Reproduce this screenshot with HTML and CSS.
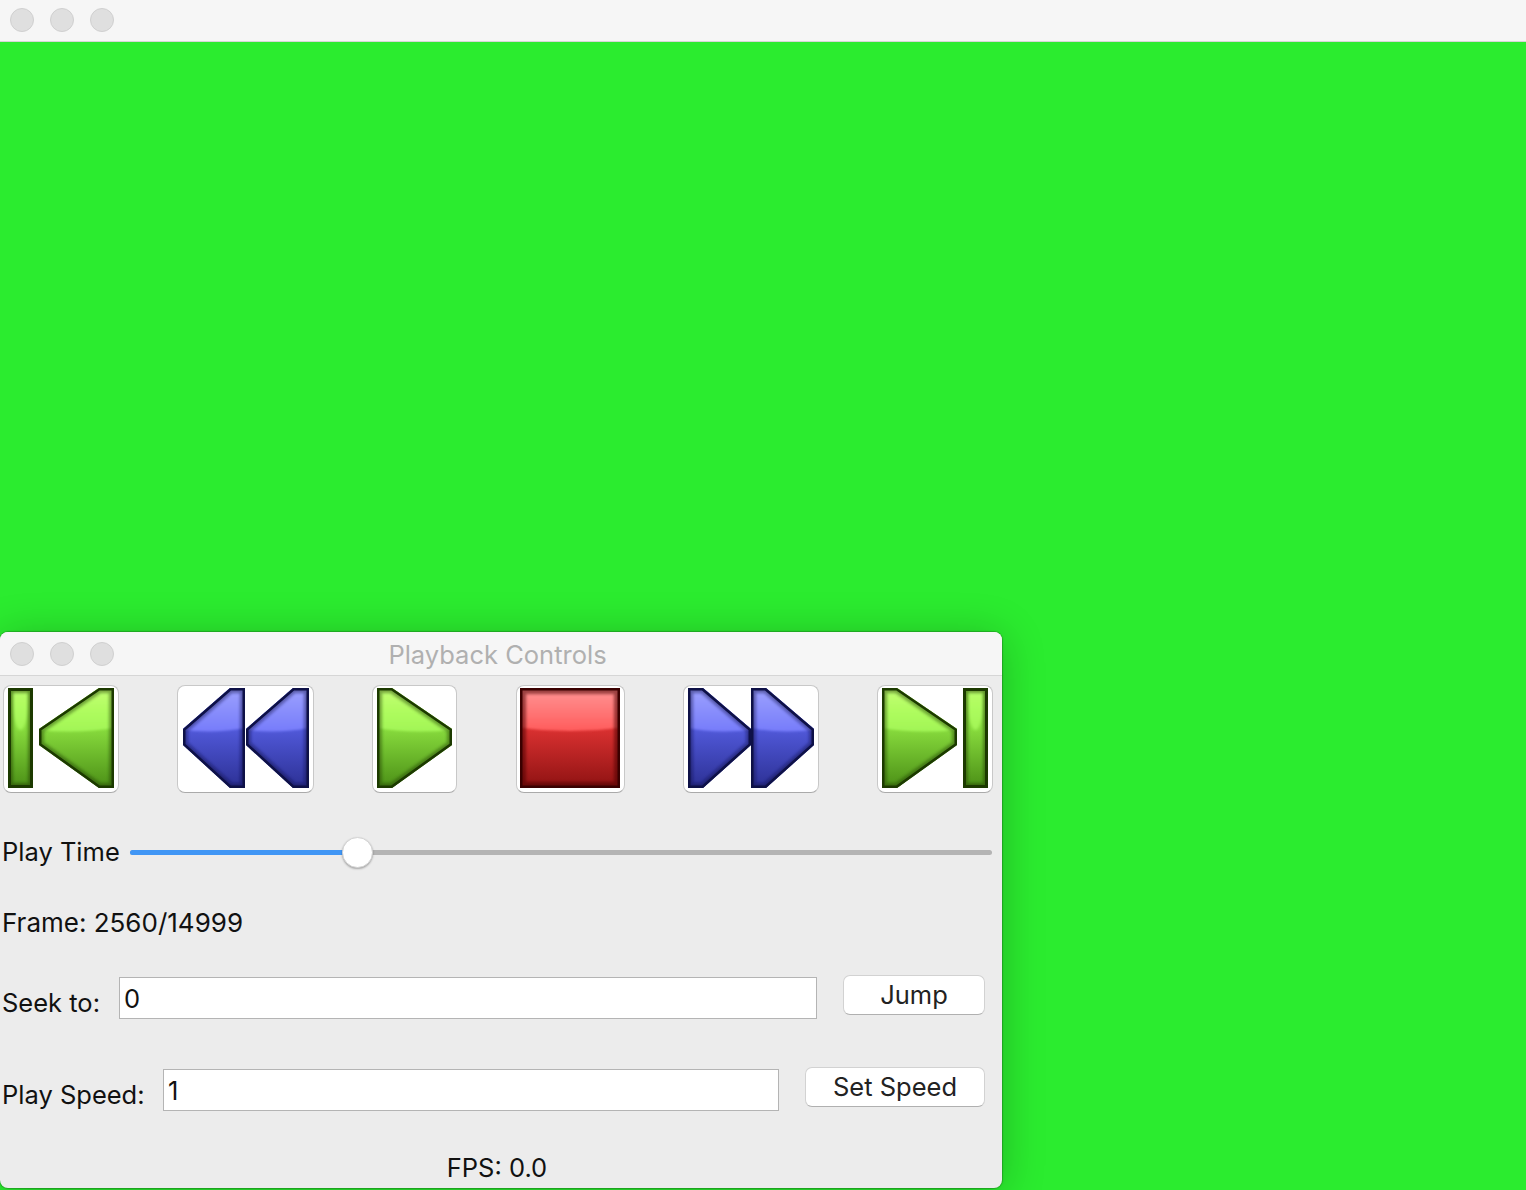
FILE: index.html
```html
<!DOCTYPE html>
<html>
  <head>
    <meta charset="UTF-8" />
    <meta name="viewport" content="width=device-width, initial-scale=1.0" />
    <title>Playback Controls</title>
    <link rel="stylesheet" href="styles.css">
  </head>
  <body>
    <header class="titlebar main-titlebar">
      <div class="lights"><span></span><span></span><span></span></div>
    </header>

    <section class="panel">
      <header class="titlebar panel-titlebar">
        <div class="lights"><span></span><span></span><span></span></div>
        <h1>Playback Controls</h1>
      </header>

      <div class="toolbar">
        <button class="icon-btn btn-first" type="button">
          <svg width="106" height="100" viewBox="0 0 106 100">
            <defs>
              <linearGradient id="green" x1="0" y1="0" x2="0" y2="1">
                <stop offset="0" stop-color="#9be84e" />
                <stop offset="0.42" stop-color="#86d93c" />
                <stop offset="1" stop-color="#4b8f16" />
              </linearGradient>
              <linearGradient id="green-gloss" x1="0" y1="0" x2="0" y2="1">
                <stop offset="0" stop-color="#c8ff78" />
                <stop offset="0.6" stop-color="#aefc5e" />
                <stop offset="1" stop-color="#a2f556" />
              </linearGradient>
              <linearGradient id="blue" x1="0" y1="0" x2="0" y2="1">
                <stop offset="0" stop-color="#5a60e0" />
                <stop offset="0.42" stop-color="#5058d8" />
                <stop offset="1" stop-color="#2c3094" />
              </linearGradient>
              <linearGradient id="blue-gloss" x1="0" y1="0" x2="0" y2="1">
                <stop offset="0" stop-color="#a2a6ff" />
                <stop offset="1" stop-color="#767cfa" />
              </linearGradient>
              <linearGradient id="red" x1="0" y1="0" x2="0" y2="1">
                <stop offset="0" stop-color="#e03636" />
                <stop offset="0.42" stop-color="#d83030" />
                <stop offset="1" stop-color="#8e1212" />
              </linearGradient>
              <linearGradient id="red-gloss" x1="0" y1="0" x2="0" y2="1">
                <stop offset="0" stop-color="#ff9c9c" />
                <stop offset="1" stop-color="#ff5c5c" />
              </linearGradient>
              <filter id="soft" x="-20%" y="-20%" width="140%" height="140%">
                <feGaussianBlur stdDeviation="1.8" />
              </filter>
              <filter id="soft-gloss" x="-40%" y="-40%" width="180%" height="180%">
                <feGaussianBlur stdDeviation="1.5" />
              </filter>
              <filter id="soft-edge" x="-10%" y="-10%" width="120%" height="120%">
                <feGaussianBlur stdDeviation="1" />
              </filter>
              <clipPath id="clip-first-bar"><rect width="25" height="100" /></clipPath>
              <clipPath id="clip-first-tri"><polygon points="31,41 91,0 106,0 106,100 91,100 31,57" /></clipPath>
            </defs>
            <g clip-path="url(#clip-first-bar)">
              <rect width="25" height="100" fill="url(#green)" />
              <ellipse cx="12.5" cy="12" rx="8" ry="30" fill="url(#green-gloss)" filter="url(#soft-gloss)" />
              <rect width="25" height="100" fill="none" stroke="#1c3a00" stroke-width="10" opacity="0.5" filter="url(#soft)" />
              <rect width="25" height="100" fill="none" stroke="#1c3a00" stroke-width="6" />
            </g>
            <g clip-path="url(#clip-first-tri)">
              <rect x="31" width="75" height="100" fill="url(#green)" />
              <path d="M25 -5H112V39Q68 47 25 41Z" fill="url(#green-gloss)" filter="url(#soft-edge)" />
              <polygon points="31,41 91,0 106,0 106,100 91,100 31,57" fill="none" stroke="#1c3a00" stroke-width="10" opacity="0.45" filter="url(#soft)" />
              <polygon points="31,41 91,0 106,0 106,100 91,100 31,57" fill="none" stroke="#1c3a00" stroke-width="5" />
            </g>
          </svg>
        </button>

        <button class="icon-btn btn-rewind" type="button">
          <svg width="126" height="100" viewBox="0 0 126 100">
            <defs>
              <clipPath id="clip-rw-a"><polygon points="0,41 47,0 62,0 62,100 47,100 0,57" /></clipPath>
              <clipPath id="clip-rw-b"><polygon points="63,41 110,0 126,0 126,100 110,100 63,57" /></clipPath>
            </defs>
            <g clip-path="url(#clip-rw-a)">
              <rect width="62" height="100" fill="url(#blue)" />
              <path d="M-5 -5H68V39Q30 47 -5 41Z" fill="url(#blue-gloss)" filter="url(#soft-edge)" />
              <polygon points="0,41 47,0 62,0 62,100 47,100 0,57" fill="none" stroke="#0e1147" stroke-width="10" opacity="0.45" filter="url(#soft)" />
              <polygon points="0,41 47,0 62,0 62,100 47,100 0,57" fill="none" stroke="#0e1147" stroke-width="5" />
            </g>
            <g clip-path="url(#clip-rw-b)">
              <rect x="63" width="63" height="100" fill="url(#blue)" />
              <path d="M58 -5H132V39Q93 47 58 41Z" fill="url(#blue-gloss)" filter="url(#soft-edge)" />
              <polygon points="63,41 110,0 126,0 126,100 110,100 63,57" fill="none" stroke="#0e1147" stroke-width="10" opacity="0.45" filter="url(#soft)" />
              <polygon points="63,41 110,0 126,0 126,100 110,100 63,57" fill="none" stroke="#0e1147" stroke-width="5" />
            </g>
          </svg>
        </button>

        <button class="icon-btn btn-play" type="button">
          <svg width="75" height="100" viewBox="0 0 75 100">
            <defs>
              <clipPath id="clip-play"><polygon points="0,0 15,0 75,41 75,57 15,100 0,100" /></clipPath>
            </defs>
            <g clip-path="url(#clip-play)">
              <rect width="75" height="100" fill="url(#green)" />
              <path d="M-6 -5H81V41Q35 47 -6 39Z" fill="url(#green-gloss)" filter="url(#soft-edge)" />
              <polygon points="0,0 15,0 75,41 75,57 15,100 0,100" fill="none" stroke="#1c3a00" stroke-width="10" opacity="0.45" filter="url(#soft)" />
              <polygon points="0,0 15,0 75,41 75,57 15,100 0,100" fill="none" stroke="#1c3a00" stroke-width="5" />
            </g>
          </svg>
        </button>

        <button class="icon-btn btn-stop" type="button">
          <svg width="100" height="100" viewBox="0 0 100 100">
            <defs>
              <clipPath id="clip-stop"><rect width="100" height="100" /></clipPath>
            </defs>
            <g clip-path="url(#clip-stop)">
              <rect width="100" height="100" fill="url(#red)" />
              <path d="M-6 -5H106V39Q50 47 -6 39Z" fill="url(#red-gloss)" filter="url(#soft-edge)" />
              <rect width="100" height="100" fill="none" stroke="#4a0000" stroke-width="12" opacity="0.55" filter="url(#soft)" />
              <rect width="100" height="100" fill="none" stroke="#3a0000" stroke-width="5" />
            </g>
          </svg>
        </button>

        <button class="icon-btn btn-forward" type="button">
          <svg width="126" height="100" viewBox="0 0 126 100">
            <defs>
              <clipPath id="clip-ff-a"><polygon points="0,0 15,0 63,41 63,57 15,100 0,100" /></clipPath>
              <clipPath id="clip-ff-b"><polygon points="63,0 78,0 126,41 126,57 78,100 63,100" /></clipPath>
            </defs>
            <g clip-path="url(#clip-ff-a)">
              <rect width="63" height="100" fill="url(#blue)" />
              <path d="M-5 -5H68V41Q30 47 -5 39Z" fill="url(#blue-gloss)" filter="url(#soft-edge)" />
              <polygon points="0,0 15,0 63,41 63,57 15,100 0,100" fill="none" stroke="#0e1147" stroke-width="10" opacity="0.45" filter="url(#soft)" />
              <polygon points="0,0 15,0 63,41 63,57 15,100 0,100" fill="none" stroke="#0e1147" stroke-width="5" />
            </g>
            <g clip-path="url(#clip-ff-b)">
              <rect x="63" width="63" height="100" fill="url(#blue)" />
              <path d="M58 -5H132V41Q93 47 58 39Z" fill="url(#blue-gloss)" filter="url(#soft-edge)" />
              <polygon points="63,0 78,0 126,41 126,57 78,100 63,100" fill="none" stroke="#0e1147" stroke-width="10" opacity="0.45" filter="url(#soft)" />
              <polygon points="63,0 78,0 126,41 126,57 78,100 63,100" fill="none" stroke="#0e1147" stroke-width="5" />
            </g>
          </svg>
        </button>

        <button class="icon-btn btn-last" type="button">
          <svg width="106" height="100" viewBox="0 0 106 100">
            <defs>
              <clipPath id="clip-last-tri"><polygon points="0,0 15,0 75,41 75,57 15,100 0,100" /></clipPath>
              <clipPath id="clip-last-bar"><rect x="81" width="25" height="100" /></clipPath>
            </defs>
            <g clip-path="url(#clip-last-tri)">
              <rect width="75" height="100" fill="url(#green)" />
              <path d="M-6 -5H81V41Q35 47 -6 39Z" fill="url(#green-gloss)" filter="url(#soft-edge)" />
              <polygon points="0,0 15,0 75,41 75,57 15,100 0,100" fill="none" stroke="#1c3a00" stroke-width="10" opacity="0.45" filter="url(#soft)" />
              <polygon points="0,0 15,0 75,41 75,57 15,100 0,100" fill="none" stroke="#1c3a00" stroke-width="5" />
            </g>
            <g clip-path="url(#clip-last-bar)">
              <rect x="81" width="25" height="100" fill="url(#green)" />
              <ellipse cx="93.5" cy="12" rx="8" ry="30" fill="url(#green-gloss)" filter="url(#soft-gloss)" />
              <rect x="81" width="25" height="100" fill="none" stroke="#1c3a00" stroke-width="10" opacity="0.5" filter="url(#soft)" />
              <rect x="81" width="25" height="100" fill="none" stroke="#1c3a00" stroke-width="6" />
            </g>
          </svg>
        </button>
      </div>

      <div class="row time-row">
        <label>Play Time</label>
        <div class="slider">
          <div class="slider-fill" style="width: 228px"><span class="slider-knob"></span></div>
        </div>
      </div>

      <div class="row frame-row">Frame: 2560/14999</div>

      <div class="row field-row seek-row">
        <label for="seek">Seek to:</label>
        <input id="seek" value="0" autocomplete="off" />
        <button class="text-btn" type="button">Jump</button>
      </div>

      <div class="row field-row speed-row">
        <label for="speed">Play Speed:</label>
        <input id="speed" value="1" autocomplete="off" />
        <button class="text-btn" type="button">Set Speed</button>
      </div>

      <div class="fps">FPS: 0.0</div>
    </section>
  </body>
</html>
```

FILE: styles.css
```css
html, body {
  height: 100%;
}
body {
  margin: 0;
  overflow: hidden;
  background: #2bec2f;
  font-family: Inter, Roboto, "Liberation Sans", sans-serif;
  font-size: 25.5px;
  color: #111;
}

.titlebar {
  position: relative;
  display: flex;
  align-items: center;
  box-sizing: border-box;
  background: #f6f6f6;
  border-bottom: 1px solid #d6d6d6;
}
.main-titlebar {
  height: 42px;
}
.panel-titlebar {
  height: 44px;
  padding: 2px 7px 0 0;
  border-radius: 8px 8px 0 0;
}
.panel-titlebar h1 {
  flex: 1;
  margin: 0;
  text-align: center;
  font-size: 25.5px;
  font-weight: 400;
  color: #b0b0b0;
}

.lights {
  position: absolute;
  left: 10px;
  top: 8px;
  display: flex;
  gap: 16px;
}
.panel-titlebar .lights {
  top: 10px;
}
.lights span {
  box-sizing: border-box;
  width: 24px;
  height: 24px;
  border-radius: 50%;
  background: #dfdfdf;
  border: 1px solid #d0d0d0;
}

/* floating window */
.panel {
  position: absolute;
  left: 0;
  top: 632px;
  width: 1002px;
  height: 556px;
  background: #ececec;
  border-radius: 8px;
  box-shadow: 0 0 1px 1px rgba(0, 0, 0, 0.22), 0 4px 44px rgba(0, 0, 0, 0.24);
}

.toolbar {
  display: flex;
  margin-top: 9px;
  padding: 0 9px 0 3px;
  justify-content: space-between;
}
.icon-btn {
  display: flex;
  align-items: center;
  justify-content: center;
  box-sizing: border-box;
  height: 108px;
  padding: 0 0 2px 0;
  background: #fff;
  border: 1px solid #c8c8c8;
  border-bottom-color: #aaa;
  border-radius: 8px;
}
.btn-first, .btn-last {
  width: 116px;
}
.btn-rewind {
  width: 137px;
  padding-left: 1px;
}
.btn-forward {
  width: 136px;
  padding-left: 1px;
}
.btn-play {
  width: 85px;
}
.btn-stop {
  width: 109px;
}

.row {
  padding-left: 2px;
  line-height: 30px;
}
.time-row {
  display: flex;
  align-items: center;
  margin-top: 44px;
  padding-right: 10px;
}
.time-row label {
  width: 128px;
}
.frame-row {
  margin-top: 41px;
  font-size: 26px;
}

.slider {
  flex: 1;
  height: 5px;
  background: #b4b4b4;
  border-radius: 3px;
}
.slider-fill {
  position: relative;
  height: 100%;
  background: #4096f5;
  border-radius: 3px 0 0 3px;
}
.slider-knob {
  position: absolute;
  right: -15px;
  top: -13px;
  box-sizing: border-box;
  width: 31px;
  height: 31px;
  border-radius: 50%;
  background: #fff;
  border: 1px solid #d4d4d4;
  box-shadow: 0 1px 2px rgba(0, 0, 0, 0.3);
}

.field-row {
  display: flex;
  align-items: flex-start;
  padding-right: 17px;
}
.seek-row {
  margin-top: 37px;
}
.speed-row {
  margin-top: 48px;
}
.field-row label {
  margin-top: 13px;
}
.seek-row label {
  width: 117px;
}
.speed-row label {
  width: 161px;
}
.field-row input {
  box-sizing: border-box;
  height: 42px;
  margin-top: 2px;
  padding: 0 4px;
  background: #fff;
  border: 1px solid #b4b4b4;
  border-radius: 0;
  outline: none;
  font: inherit;
  color: #111;
}
.seek-row input {
  width: 698px;
}
.speed-row input {
  width: 616px;
}

.text-btn {
  box-sizing: border-box;
  height: 40px;
  margin-left: auto;
  padding: 0;
  background: #fff;
  border: 1px solid #d2d2d2;
  border-bottom-color: #b0b0b0;
  border-radius: 7px;
  font: inherit;
  color: #222;
}
.seek-row .text-btn {
  width: 142px;
}
.speed-row .text-btn {
  width: 180px;
}

.fps {
  margin-top: 42px;
  padding-right: 8px;
  text-align: center;
  line-height: 30px;
}
```
